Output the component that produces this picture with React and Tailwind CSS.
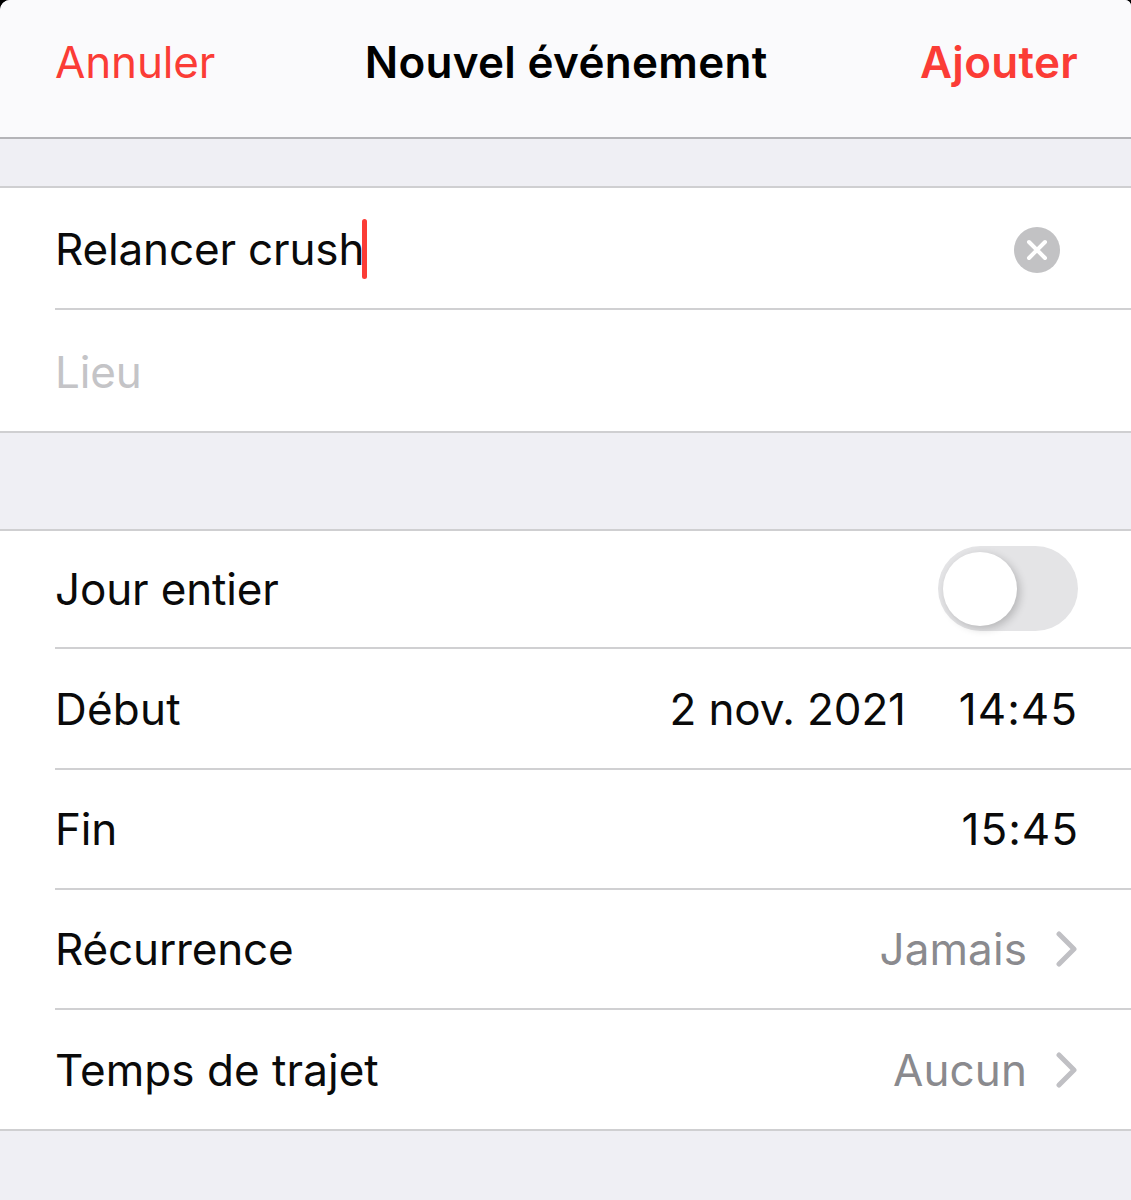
const font = { fontFamily: "Inter, 'Liberation Sans', sans-serif" };

function Chevron() {
  return (
    <svg width="22" height="36" viewBox="0 0 22 36" fill="none" className="ml-[29px] mr-[-1px]">
      <path d="M3 3 L18 18 L3 33" stroke="#c0c0c4" strokeWidth="5" strokeLinecap="round" strokeLinejoin="round" />
    </svg>
  );
}

function Row({ h, children, last }) {
  return (
    <div className={`pl-[55px] ${h}`}>
      <div className={`h-full flex items-center pr-[54px] ${last ? "" : "border-b-2 border-[#d0d0d2]"}`}>
        {children}
      </div>
    </div>
  );
}

export default function App() {
  return (
    <div style={font} className="w-[1131px] h-[1200px] overflow-hidden bg-black text-[44px] tracking-[-0.15px] text-[#0a0a0a]">
      <div className="h-full bg-[#efeff4] rounded-tl-[10px] rounded-tr-[6px] overflow-hidden">
        <header className="h-[139px] bg-[#fafafc] border-b-2 border-[#b4b4b8] flex items-center justify-between pl-[55px] pr-[54px] pb-[14px]">
          <span className="text-[#fb3c36] font-normal">Annuler</span>
          <span className="font-semibold text-black tracking-[0.3px] mr-[3px]">Nouvel événement</span>
          <span className="text-[#fb3c36] font-semibold tracking-[0.3px] mr-[-1px]">Ajouter</span>
        </header>

        <div className="h-[47px]" />

        <section className="bg-white border-y-2 border-[#cfcfd1]">
          <Row h="h-[122px]">
            <span className="flex-1 flex items-center pt-[2px]">
              Relancer crush
              <span className="w-[5px] h-[60px] rounded-full bg-[#fb3c36] ml-[-2px]" />
            </span>
            <span className="w-[46px] h-[46px] rounded-full bg-[#c2c2c4] flex items-center justify-center mr-[17px] mt-[3px]">
              <svg width="22" height="22" viewBox="0 0 22 22" fill="none">
                <path d="M3 3 L19 19 M19 3 L3 19" stroke="#fff" strokeWidth="4" strokeLinecap="round" />
              </svg>
            </span>
          </Row>
          <Row h="h-[121px]" last>
            <span className="text-[#c4c4c7] pt-[3px]">Lieu</span>
          </Row>
        </section>

        <div className="h-[96px]" />

        <section className="bg-white border-y-2 border-[#cfcfd1]">
          <Row h="h-[118px]">
            <span className="flex-1">Jour entier</span>
            <span className="relative w-[140px] h-[85px] rounded-full bg-[#e4e4e6] mr-[-1px] mb-[2px]">
              <span className="absolute left-[5px] top-[6px] w-[74px] h-[74px] rounded-full bg-white shadow-[3px_3px_8px_rgba(0,0,0,0.2)]" />
            </span>
          </Row>
          <Row h="h-[121px]">
            <span className="flex-1 tracking-[0.2px]">Début</span>
            <span className="mr-[53px]">2 nov. 2021</span>
            <span className="tracking-[1px] mr-[-1px]">14:45</span>
          </Row>
          <Row h="h-[120px]">
            <span className="flex-1">Fin</span>
            <span className="tracking-[1px] mr-[-2px]">15:45</span>
          </Row>
          <Row h="h-[120px]">
            <span className="flex-1">Récurrence</span>
            <span className="text-[#8a8a8e] tracking-[0.1px]">Jamais</span>
            <Chevron />
          </Row>
          <Row h="h-[119px]" last>
            <span className="flex-1 tracking-[0.05px]">Temps de trajet</span>
            <span className="text-[#8a8a8e] tracking-[0.1px]">Aucun</span>
            <Chevron />
          </Row>
        </section>
      </div>
    </div>
  );
}
